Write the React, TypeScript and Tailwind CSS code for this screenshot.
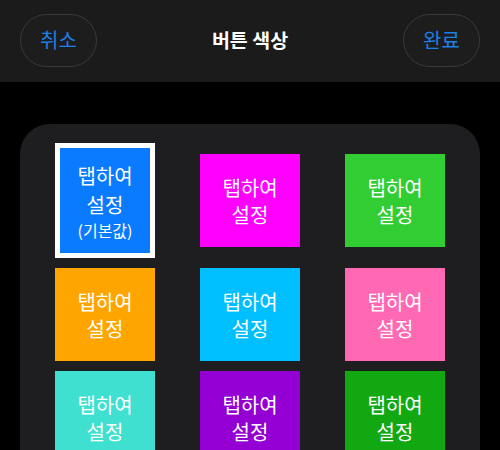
import React from "react";

const tiles = [
  { color: "bg-[#0a7aff]", selected: true },
  { color: "bg-[#ff00ff]" },
  { color: "bg-[#32cd32]" },
  { color: "bg-[#ffa500]" },
  { color: "bg-[#00bfff]" },
  { color: "bg-[#ff69b4]" },
  { color: "bg-[#40e0d0]" },
  { color: "bg-[#9400d3]" },
  { color: "bg-[#12a812]" },
];

function Tile({ color, selected }: { color: string; selected?: boolean }) {
  if (selected) {
    return (
      <div className="w-[100px] h-[115px] border-[5px] border-white bg-white">
        <div className={`w-full h-full ${color} flex flex-col items-center justify-center text-white`}>
          <span className="text-[20px] leading-[29px]">탭하여</span>
          <span className="text-[20px] leading-[29px]">설정</span>
          <span className="text-[16px] leading-[22px]">(기본값)</span>
        </div>
      </div>
    );
  }
  return (
    <div className={`w-[100px] h-[93px] ${color} flex flex-col items-center justify-center text-white`}>
      <span className="text-[20px] leading-[27px]">탭하여</span>
      <span className="text-[20px] leading-[27px]">설정</span>
    </div>
  );
}

export default function App() {
  return (
    <div
      className="w-[500px] h-[450px] bg-black overflow-hidden"
      style={{ fontFamily: '"Noto Sans CJK KR", "Noto Sans", sans-serif' }}
    >
      {/* Header */}
      <div className="h-[82px] bg-[#1b1b1b] flex items-center justify-between px-5 pb-[2px]">
        <button className="w-[77px] h-[53px] rounded-full border border-[#3a3a3a] bg-[#1d1d1d] text-[20px] text-[#1e7fe6]">
          취소
        </button>
        <div className="text-[19.5px] font-semibold text-white">버튼 색상</div>
        <button className="w-[77px] h-[53px] rounded-full border border-[#3a3a3a] bg-[#1d1d1d] text-[20px] text-[#1e7fe6]">
          완료
        </button>
      </div>

      {/* Color grid */}
      <div className="mt-[42px] mx-5 rounded-[30px] bg-[#1e1e20] pt-[19px] pb-[20px] px-[35px] grid grid-cols-3 gap-x-[45px] gap-y-[10px] items-center">
        {tiles.map((t, i) => (
          <Tile key={i} color={t.color} selected={t.selected} />
        ))}
      </div>
    </div>
  );
}
